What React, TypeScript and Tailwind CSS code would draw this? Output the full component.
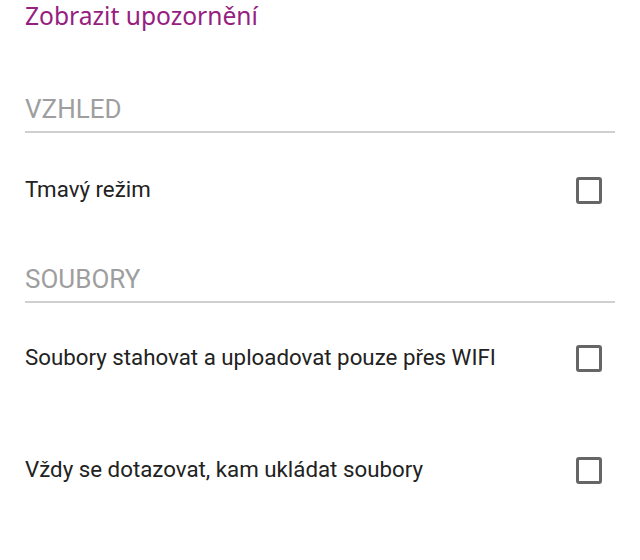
import React from "react";

function Checkbox() {
  return (
    <div className="w-[26px] h-[27px] border-[3px] border-[#666666] rounded-[3px] shrink-0" />
  );
}

function Row({ label, className }: { label: string; className: string }) {
  return (
    <div className={`h-[56px] flex items-center justify-between pr-[13px] ${className}`}>
      <span className="text-[22.3px] text-[#222222]">{label}</span>
      <Checkbox />
    </div>
  );
}

function Header({ label, className }: { label: string; className: string }) {
  return (
    <div className={className}>
      <div className="text-[26px] leading-[32px] text-[#9e9e9e]">{label}</div>
      <div className="mt-[6px] h-[2px] bg-[#d0d0d0]" />
    </div>
  );
}

export default function App() {
  return (
    <div
      className="w-[640px] h-[560px] bg-white px-[25px] overflow-hidden"
      style={{ fontFamily: "Roboto, 'Noto Sans', sans-serif" }}
    >
      <div
        className="text-[24.6px] leading-[32px] text-[#96207f]"
        style={{ fontFamily: "'Noto Sans', Roboto, sans-serif" }}
      >
        Zobrazit upozornění
      </div>
      <Header label="VZHLED" className="mt-[61px]" />
      <Row label="Tmavý režim" className="mt-[29px]" />
      <Header label="SOUBORY" className="mt-[45px]" />
      <Row label="Soubory stahovat a uploadovat pouze přes WIFI" className="mt-[27px]" />
      <Row label="Vždy se dotazovat, kam ukládat soubory" className="mt-[56px]" />
    </div>
  );
}
